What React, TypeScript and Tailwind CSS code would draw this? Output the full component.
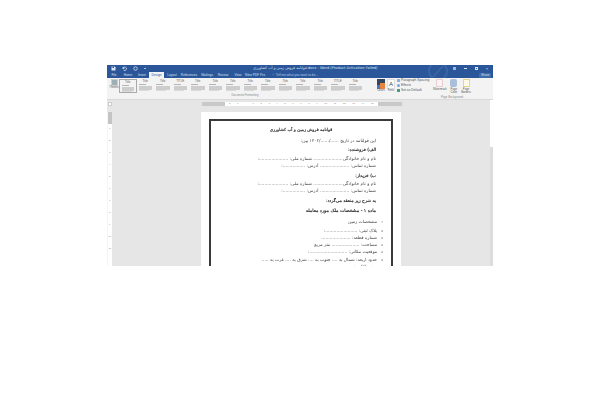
import React from 'react';

const tabs = [
  { name: 'File', w: 'w-[14px]' },
  { name: 'Home', w: 'w-[14px]' },
  { name: 'Insert', w: 'w-[14px]' },
  { name: 'Design', w: 'w-[15px]', active: true },
  { name: 'Layout', w: 'w-[16px]' },
  { name: 'References', w: 'w-[18px]' },
  { name: 'Mailings', w: 'w-[18px]' },
  { name: 'Review', w: 'w-[14px]' },
  { name: 'View', w: 'w-[16px]' },
  { name: 'Nitro PDF Pro', w: 'w-[18px]' },
];

const thumbs = ['Title', 'Title', 'Title', 'TITLE', 'Title', 'Title', 'Title', 'Title', 'Title', 'Title', 'Title', 'Title', 'TITLE', 'Title'];

function Thumb({ title, active }: { title: string; active?: boolean }) {
  return (
    <div className={`w-[17.5px] h-[14px] shrink-0 px-[2px] pt-[1px] ${active ? 'border border-[#a8a8a8]' : ''}`}>
      <div className="text-[3px] leading-[3px] text-center text-[#666]">{title}</div>
      <div className="mt-[1px] h-[1px] w-[7px] bg-[#b5b5b5]" />
      <div className="mt-[1px] h-[4px] bg-[#cdcdcd]" />
      <div className="h-[1px] w-[10px] bg-[#dadada]" />
    </div>
  );
}

function HRuler() {
  const nums = ['2', '1', '', '1', '2', '3', '4', '5', '6', '7', '8', '9', '10', '11', '12', '13', '14', '15'];
  return (
    <div className="ml-[89px] w-[200px] h-[4px] flex bg-white text-[2.5px] leading-[4px] text-[#888]" dir="ltr">
      <div className="w-[23px] bg-[#c9c9c9]" />
      <div className="flex-1 flex justify-between px-[4px]">
        {nums.map((n, i) => (
          <span key={i}>{n || '·'}</span>
        ))}
      </div>
      <div className="w-[24px] bg-[#c9c9c9]" />
    </div>
  );
}

function VRuler() {
  const nums = ['1', '2', '3', '4', '5', '6', '7', '8', '9', '10', '11'];
  return (
    <div className="w-[5px] shrink-0 bg-[#f5f5f5] pl-[1px]">
      <div className="w-[3.5px] h-full bg-white flex flex-col text-[2.5px] leading-[3px] text-[#888] text-center overflow-hidden">
        <div className="h-[12px] shrink-0 bg-[#c4c4c4]" />
        <div className="flex flex-col gap-[9px] pt-[3px]">
          {nums.map((n) => (
            <span key={n}>{n}</span>
          ))}
        </div>
      </div>
    </div>
  );
}

function Line({ text, bold, h, size }: { text: string; bold?: boolean; h: string; size?: string }) {
  return (
    <div className={`${h} ${size ?? 'text-[4.4px]'} ${bold ? '[-webkit-text-stroke:0.15px_#222] text-[#222]' : 'text-[#444]'} pr-[15px] flex items-end whitespace-nowrap leading-none`}>
      {text}
    </div>
  );
}

function Item({ text, h, strong }: { text: string; h: string; strong?: boolean }) {
  return (
    <div className={`${h} flex items-end whitespace-nowrap text-[4.4px] leading-none text-[#444]`}>
      <span className="w-[11px] pr-[8px] shrink-0 text-[3px]">{strong ? '•' : 'o'}</span>
      <span className="pr-[3px]">{text}</span>
    </div>
  );
}

export default function App() {
  return (
    <div className="w-[600px] h-[400px] bg-white pt-[65px] pl-[107px] overflow-hidden font-['Liberation_Sans',sans-serif]">
      <div className="w-[386px] h-[201px] flex flex-col overflow-hidden bg-[#e6e6e6] relative">
        {/* ring pattern of the title bar */}
        <svg className="absolute left-[318px] top-0" width="26" height="13" viewBox="0 0 26 13">
          <circle cx="13" cy="6" r="9" fill="none" stroke="#3a66a6" strokeWidth="2" />
          <path d="M8 12L18 1" stroke="#3a66a6" strokeWidth="1.5" />
        </svg>
        {/* title bar */}
        <div className="h-[7px] shrink-0 bg-[#2b579a] flex items-center text-[#dce6f4]">
          <div className="w-[46px] flex items-center gap-[6px] pl-[4px] relative">
            <svg width="5" height="5" viewBox="0 0 10 10"><path d="M1 1h6.5L9 2.5V9H1z" fill="#dce6f4" /><path d="M3 1h3v3H3z" fill="#2b579a" /></svg>
            <svg width="5" height="5" viewBox="0 0 10 10"><path d="M2 5a3.5 3.5 0 1 1 1 3M2 2v3h3" fill="none" stroke="#dce6f4" strokeWidth="1.5" /></svg>
            <svg width="5" height="5" viewBox="0 0 10 10"><circle cx="5" cy="5" r="3.5" fill="none" stroke="#dce6f4" strokeWidth="1.5" /></svg>
            <div className="w-[2px] h-[1px] bg-[#a9bfdd]" />
          </div>
          <div className="ml-[100px] text-[3.6px] leading-none whitespace-nowrap font-['DejaVu_Sans',sans-serif] relative">
            قوانامه فروش زمین و آب کشاورزی.docx - Word (Product Activation Failed)
          </div>
          <div className="ml-auto flex items-center gap-[8px] pr-[5px] relative">
            <div className="w-[3px] h-[3px] bg-[#9db6da]" />
            <div className="w-[3px] h-[1px] bg-[#dce6f4]" />
            <div className="w-[3px] h-[3px] border border-[#dce6f4]" />
            <div className="text-[4px] leading-none">×</div>
          </div>
        </div>
        {/* tabs */}
        <div className="h-[6px] shrink-0 bg-[#2b579a] flex items-end text-[3.2px] leading-[6px] text-[#d5e0f0]">
          {tabs.map((t) => (
            <div key={t.name} className={`${t.w} shrink-0 flex justify-center whitespace-nowrap relative ${t.active ? 'bg-[#f3f3f3] text-[#2b579a]' : ''}`}>
              {t.name}
            </div>
          ))}
          <div className="ml-[8px] whitespace-nowrap text-[#b9cbe4] relative">♡ Tell me what you want to do...</div>
          <div className="ml-auto mr-[2px] mb-[0.5px] h-[5px] px-[1.5px] bg-[#3f6aa8] leading-[5px] whitespace-nowrap relative">Share</div>
        </div>
        {/* ribbon */}
        <div className="h-[22px] shrink-0 bg-[#f3f3f3] border-b border-[#d9d9d9] flex pl-[2px] pt-[1px]">
          <div className="w-[10px] shrink-0 flex flex-col items-center">
            <div className="w-[7px] h-[7px] bg-[#9fb0b4] border border-[#ccc]" />
            <div className="text-[2.6px] leading-[4px] text-[#555]">Themes</div>
          </div>
          <div className="w-[252px] shrink-0 flex flex-col">
            <div className="flex overflow-hidden h-[14px]">
              {thumbs.map((t, i) => (
                <Thumb key={i} title={t} active={i === 0} />
              ))}
            </div>
            <div className="text-[2.8px] leading-[5px] text-[#888] text-center">Document Formatting</div>
          </div>
          <div className="w-[6px] shrink-0" />
          <div className="flex gap-[2px] shrink-0">
            <div className="flex flex-col items-center w-[8px]">
              <svg width="8" height="10" viewBox="0 0 8 10">
                <rect width="8" height="10" fill="#33465f" />
                <rect x="3" y="4" width="5" height="6" fill="#e8843c" />
                <rect y="6" width="3" height="4" fill="#4a79bb" />
              </svg>
              <div className="text-[2.6px] leading-[4px] text-[#555]">Colors</div>
            </div>
            <div className="flex flex-col items-center w-[8px]">
              <div className="w-[8px] h-[10px] bg-white border border-[#ddd] text-[6px] leading-[8px] text-center text-[#444]">A</div>
              <div className="text-[2.6px] leading-[4px] text-[#555]">Fonts</div>
            </div>
          </div>
          <div className="ml-[2px] w-[36px] shrink-0 flex flex-col gap-[1.5px] text-[3.3px] leading-[3.5px] text-[#555] whitespace-nowrap">
            <div className="flex items-center gap-[1px]"><span className="w-[3px] h-[3px] bg-[#8fb0dc]" />Paragraph Spacing</div>
            <div className="flex items-center gap-[1px]"><span className="w-[3px] h-[3px] rounded-full bg-[#7ea4d6]" />Effects</div>
            <div className="flex items-center gap-[1px]"><span className="w-[3px] h-[3px] bg-[#4f9a76]" />Set as Default</div>
          </div>
          <div className="w-[38px] shrink-0 flex flex-col">
            <div className="flex justify-between text-[2.8px] leading-[3px] text-[#555] text-center">
              {[
                ['Watermark', 'border border-[#e5cfd2] bg-[#fbf3f3]', ''],
                ['Page', 'bg-[#a9bfdc] rounded-[2px]', 'Color'],
                ['Page', 'border border-[#e9d58a] bg-[#fdf9e6]', 'Borders'],
              ].map(([a, cls, b]) => (
                <div key={a + b} className="flex flex-col items-center">
                  <div className={`w-[7px] h-[8px] mb-[1px] ${cls}`} />
                  <div>{a}</div>
                  <div>{b}</div>
                </div>
              ))}
            </div>
            <div className="mt-auto text-[2.8px] leading-[4px] text-[#888] text-center">Page Background</div>
          </div>
        </div>
        {/* document area and scrollbar */}
        <div className="flex-1 min-h-0 flex">
          <div className="flex-1 min-w-0 flex flex-col">
            <div className="h-[12px] shrink-0 pt-[2px] pl-[1px] flex">
              <div className="absolute w-[4px] h-[4px] bg-white border border-[#ccc]" />
              <div className="pl-[5px]">
                <HRuler />
              </div>
            </div>
            <div className="flex-1 min-h-0 flex">
              <VRuler />
              <div className="flex-1 min-w-0 pl-[89px]">
                <div className="w-[200px] h-full bg-white pt-[7px] px-[8px]">
                  <div dir="rtl" className="w-[184px] h-[200px] border-2 border-b-0 border-[#3a3a3a] font-['DejaVu_Sans',sans-serif] overflow-hidden [will-change:transform]">
                    <div className="h-[11px] flex items-end justify-center text-[4.2px] [-webkit-text-stroke:0.15px_#222] leading-none text-[#222]">
                      قوانامه فروش زمین و آب کشاورزی
                    </div>
                    <Line h="h-[11px]" text="این قولنامه در تاریخ ....../....../۱۴۰۲ بین:" />
                    <Line h="h-[9px]" bold text="الف) فروشنده:" />
                    <Line h="h-[9px]" text="نام و نام خانوادگی..................... شماره ملی: .....................:" />
                    <Line h="h-[7px]" text="شماره تماس: ..................... آدرس: ................:" />
                    <Line h="h-[10px]" bold text="ب) خریدار:" />
                    <Line h="h-[8px]" text="نام و نام خانوادگی..................... شماره ملی: .....................:" />
                    <Line h="h-[7px]" text="شماره تماس: ..................... آدرس: ................:" />
                    <Line h="h-[10px]" bold text="به شرح زیر منعقد می‌گردد:" />
                    <Line h="h-[11px]" bold size="text-[4.6px]" text="ماده ۱ - مشخصات ملک مورد معامله" />
                    <Item h="h-[10px]" strong text="مشخصات زمین" />
                    <Item h="h-[9px]" text="پلاک ثبتی: .......................:" />
                    <Item h="h-[7px]" text="شماره قطعه: ....................." />
                    <Item h="h-[7px]" text="مساحت: .................... متر مربع" />
                    <Item h="h-[7px]" text="موقعیت مکانی: ...........................:" />
                    <Item h="h-[8px]" text="حدود اربعه: شمال به .... جنوب به .... شرق به .... غرب به ....." />
                    <Item h="h-[7px]" text="سند مالکیت: ......" />
                  </div>
                </div>
              </div>
            </div>
          </div>
          <div className="w-[3px] shrink-0 bg-[#dcdcdc] flex flex-col">
            <div className="h-[47px] bg-white" />
          </div>
        </div>
      </div>
    </div>
  );
}
